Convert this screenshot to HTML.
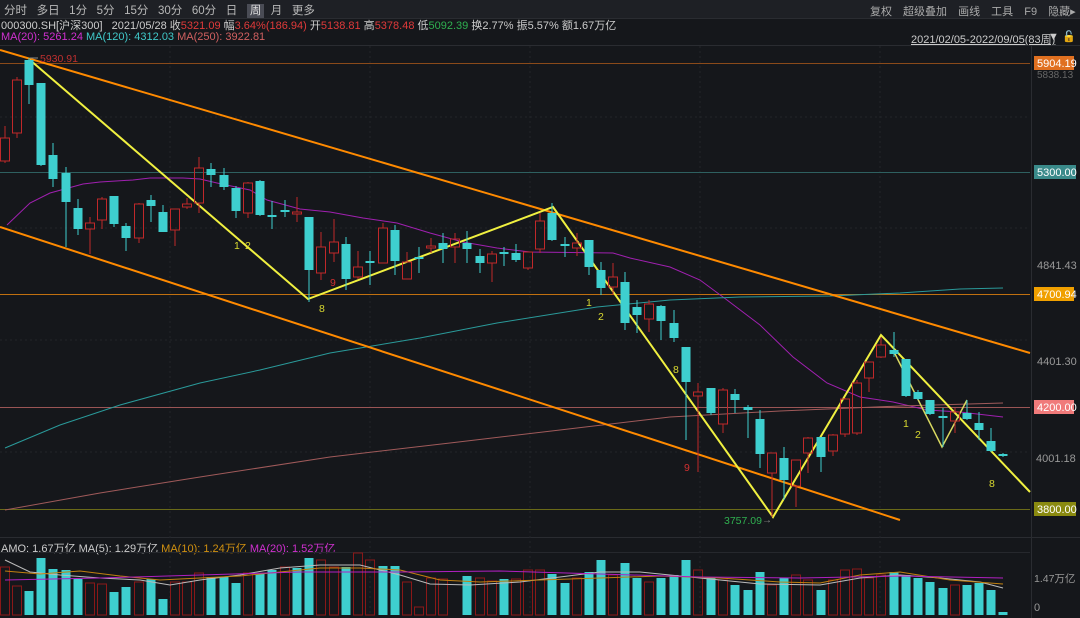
<!DOCTYPE html><html><head><meta charset="utf-8"><style>
*{margin:0;padding:0}body{width:1080px;height:618px;background:#15171b;overflow:hidden;font-family:"Liberation Sans","Noto Sans CJK SC",sans-serif;position:relative;color:#ccc}
.t{position:absolute;white-space:nowrap;font-size:11px}
</style></head><body>
<div style="position:absolute;left:0;top:0;width:1080px;height:18px;background:#1e2025;border-bottom:1px solid #2a2c31"></div>
<div class="t" style="top:2px;left:4px;font-size:11.5px;color:#b8b8b8;word-spacing:0">分时&nbsp;&nbsp;&nbsp;多日&nbsp;&nbsp;&nbsp;1分&nbsp;&nbsp;&nbsp;5分&nbsp;&nbsp;&nbsp;15分&nbsp;&nbsp;&nbsp;30分&nbsp;&nbsp;&nbsp;60分&nbsp;&nbsp;&nbsp;日&nbsp;&nbsp;&nbsp;<span style="background:#4a4c55;color:#ddd;padding:1px 3px">周</span>&nbsp;&nbsp;月&nbsp;&nbsp;&nbsp;更多</div>
<div class="t" style="top:3px;left:870px;color:#aaa;word-spacing:8px">复权 超级叠加 画线 工具 F9 隐藏▸</div>
<div class="t" style="top:17px;left:1px;color:#ccc">000300.SH[沪深300]&nbsp;&nbsp; 2021/05/28 收<span style="color:#e03a3a">5321.09</span> 幅<span style="color:#e03a3a">3.64%(186.94)</span> 开<span style="color:#e03a3a">5138.81</span> 高<span style="color:#e03a3a">5378.48</span> 低<span style="color:#2fb050">5092.39</span> 换2.77% 振5.57% 额1.67万亿</div>
<div class="t" style="top:31px;left:1px"><span style="color:#d030d0">MA(20): 5261.24</span> <span style="color:#40c8c8">MA(120): 4312.03</span> <span style="color:#d06060">MA(250): 3922.81</span></div>
<div class="t" style="top:31px;left:911px;color:#ccc;text-decoration:underline">2021/02/05-2022/09/05(83周)</div>
<div class="t" style="top:30px;left:1048px;color:#ccc">▼ <span style="color:#e0a000">🔓</span></div>
<div class="t" style="top:540px;left:1px"><span style="color:#ccc">AMO: 1.67万亿 MA(5): 1.29万亿</span> <span style="color:#d09010">MA(10): 1.24万亿</span> <span style="color:#d030d0">MA(20): 1.52万亿</span></div>
<svg width="1080" height="618" style="position:absolute;left:0;top:0" font-family="Liberation Sans,sans-serif" font-size="11">
<line x1="0" y1="45.5" x2="1080" y2="45.5" stroke="#2a2c31"/>
<line x1="0" y1="537.5" x2="1080" y2="537.5" stroke="#2a2c31"/>
<line x1="0" y1="552.5" x2="1030" y2="552.5" stroke="#26282d"/>
<line x1="1031.5" y1="46" x2="1031.5" y2="618" stroke="#2a2c31"/>
<g stroke="#22252a" stroke-dasharray="2,3"><line x1="0" y1="117" x2="1030" y2="117"/><line x1="0" y1="228" x2="1030" y2="228"/><line x1="0" y1="340" x2="1030" y2="340"/><line x1="0" y1="452" x2="1030" y2="452"/>
<line x1="170" y1="46" x2="170" y2="615"/><line x1="370" y1="46" x2="370" y2="615"/><line x1="530" y1="46" x2="530" y2="615"/><line x1="700" y1="46" x2="700" y2="615"/><line x1="880" y1="46" x2="880" y2="615"/></g>
<line x1="0" y1="63.5" x2="1030" y2="63.5" stroke="#8a4a1a"/>
<line x1="0" y1="172.5" x2="1030" y2="172.5" stroke="#2e6060"/>
<line x1="0" y1="294.5" x2="1030" y2="294.5" stroke="#c07010"/>
<line x1="0" y1="407.5" x2="1030" y2="407.5" stroke="#9a5555"/>
<line x1="0" y1="509.5" x2="1030" y2="509.5" stroke="#6a6a18"/>
<polyline fill="none" stroke="#a020b0" stroke-width="1" points="7,225 30,203 50,193 83,184 100,182 133,180 150,178 183,178 200,179 217,183 250,190 267,200 300,209 330,212 363,218 397,223 430,233 463,242 497,248 530,252 613,253 630,258 670,267 700,280 727,300 760,325 793,357 827,383 860,397 893,402 927,410 960,412 1003,417"/>
<polyline fill="none" stroke="#2a9a9a" points="5,448 60,425 120,405 200,383 260,370 330,353 420,338 497,323 597,307 670,300 740,297 830,296 900,293 960,289 1003,288"/>
<polyline fill="none" stroke="#a05a5a" points="5,510 100,493 200,477 330,457 450,443 560,430 670,417 780,411 900,406 1003,403"/>
<g stroke="#ff8a00" stroke-width="2"><line x1="0" y1="50" x2="1030" y2="353"/><line x1="0" y1="227" x2="900" y2="520"/></g>
<polyline fill="none" stroke="#f0f040" stroke-width="2" points="30,60 308,299 553,207 773,517 881,335 1030,492"/>
<polyline fill="none" stroke="#d8d860" stroke-width="1.5" points="893,350 942,447 967,400"/>
<g id="c"></g>
<g stroke-width="1">
<path stroke="#c0282a" fill="none" d="M5 126V138M5 161V163M17 77V80M17 133V138M90 217V223M90 229V254M102 197V199M102 220V229M139 203V204M139 238V243M175 230V246M187 198V204M187 207V209M199 157V168M199 203V213M248 182V183M248 213V218M297 197V212M297 214V222M321 232V247M321 273V280M334 219V242M334 253V262M358 251V267M358 277V279M383 223V228M407 252V262M431 238V246M431 248V253M455 233V239M455 247V263M492 251V254M492 263V282M528 268V270M540 213V221M540 249V253M577 233V243M577 248V256M613 263V277M613 287V295M649 300V304M649 319V332M698 383V392M698 396V472M723 388V390M723 424V433M772 473V517M796 486V507M808 437V438M808 453V473M833 434V435M833 451V456M845 398V399M845 434V437M857 380V383M857 433V435M869 378V392M881 337V345M881 357V358M955 408V412M955 421V433"/>
<g fill="none" stroke="#c0282a"><rect x="0.5" y="138" width="9" height="23"/><rect x="12.5" y="80" width="9" height="53"/><rect x="85.5" y="223" width="9" height="6"/><rect x="97.5" y="199" width="9" height="21"/><rect x="134.5" y="204" width="9" height="34"/><rect x="170.5" y="209" width="9" height="21"/><rect x="182.5" y="204" width="9" height="3"/><rect x="194.5" y="168" width="9" height="35"/><rect x="243.5" y="183" width="9" height="30"/><rect x="292.5" y="212" width="9" height="2"/><rect x="316.5" y="247" width="9" height="26"/><rect x="329.5" y="242" width="9" height="11"/><rect x="353.5" y="267" width="9" height="10"/><rect x="378.5" y="228" width="9" height="35"/><rect x="402.5" y="262" width="9" height="17"/><rect x="426.5" y="246" width="9" height="2"/><rect x="450.5" y="239" width="9" height="8"/><rect x="487.5" y="254" width="9" height="9"/><rect x="523.5" y="252" width="9" height="16"/><rect x="535.5" y="221" width="9" height="28"/><rect x="572.5" y="243" width="9" height="5"/><rect x="608.5" y="277" width="9" height="10"/><rect x="644.5" y="304" width="9" height="15"/><rect x="693.5" y="392" width="9" height="4"/><rect x="718.5" y="390" width="9" height="34"/><rect x="767.5" y="453" width="9" height="20"/><rect x="791.5" y="460" width="9" height="26"/><rect x="803.5" y="438" width="9" height="15"/><rect x="828.5" y="435" width="9" height="16"/><rect x="840.5" y="399" width="9" height="35"/><rect x="852.5" y="383" width="9" height="50"/><rect x="864.5" y="362" width="9" height="16"/><rect x="876.5" y="345" width="9" height="12"/><rect x="950.5" y="412" width="9" height="9"/></g>
<path stroke="#3ecfcf" d="M29 58V104M41 83V166M53 143V187M66 167V247M78 199V235M114 196V227M126 223V251M151 195V222M163 205V232M211 163V187M224 168V190M236 186V218M260 180V216M272 201V229M285 200V217M309 217V302M346 237V290M370 251V285M395 225V275M419 247V273M443 233V263M467 231V263M480 249V273M504 247V266M516 244V262M552 203V241M565 237V257M589 240V275M601 262V295M625 272V330M637 300V333M661 305V340M674 310V342M686 347V440M711 388V415M735 389V413M748 405V438M760 410V468M784 447V500M821 437V472M894 332V357M906 359V397M918 390V400M930 400V415M943 408V447M967 400V420M979 412V440M991 428V452M1003 453V457"/>
<g fill="#3ecfcf"><rect x="24.5" y="60" width="9" height="25"/><rect x="36.5" y="83" width="9" height="82"/><rect x="48.5" y="155" width="9" height="24"/><rect x="61.5" y="173" width="9" height="29"/><rect x="73.5" y="208" width="9" height="21"/><rect x="109.5" y="196" width="9" height="28"/><rect x="121.5" y="226" width="9" height="12"/><rect x="146.5" y="200" width="9" height="6"/><rect x="158.5" y="212" width="9" height="20"/><rect x="206.5" y="169" width="9" height="6"/><rect x="219.5" y="175" width="9" height="12"/><rect x="231.5" y="188" width="9" height="23"/><rect x="255.5" y="181" width="9" height="34"/><rect x="267.5" y="215" width="9" height="2"/><rect x="280.5" y="210" width="9" height="2"/><rect x="304.5" y="217" width="9" height="53"/><rect x="341.5" y="244" width="9" height="35"/><rect x="365.5" y="261" width="9" height="2"/><rect x="390.5" y="230" width="9" height="31"/><rect x="414.5" y="257" width="9" height="2"/><rect x="438.5" y="243" width="9" height="6"/><rect x="462.5" y="243" width="9" height="6"/><rect x="475.5" y="256" width="9" height="7"/><rect x="499.5" y="252" width="9" height="2"/><rect x="511.5" y="253" width="9" height="7"/><rect x="547.5" y="213" width="9" height="27"/><rect x="560.5" y="244" width="9" height="2"/><rect x="584.5" y="240" width="9" height="27"/><rect x="596.5" y="270" width="9" height="18"/><rect x="620.5" y="282" width="9" height="41"/><rect x="632.5" y="307" width="9" height="8"/><rect x="656.5" y="306" width="9" height="15"/><rect x="669.5" y="323" width="9" height="15"/><rect x="681.5" y="347" width="9" height="35"/><rect x="706.5" y="388" width="9" height="25"/><rect x="730.5" y="394" width="9" height="6"/><rect x="743.5" y="407" width="9" height="3"/><rect x="755.5" y="419" width="9" height="35"/><rect x="779.5" y="458" width="9" height="22"/><rect x="816.5" y="437" width="9" height="20"/><rect x="889.5" y="350" width="9" height="4"/><rect x="901.5" y="359" width="9" height="37"/><rect x="913.5" y="392" width="9" height="7"/><rect x="925.5" y="400" width="9" height="14"/><rect x="938.5" y="416" width="9" height="2"/><rect x="962.5" y="413" width="9" height="6"/><rect x="974.5" y="423" width="9" height="7"/><rect x="986.5" y="441" width="9" height="10"/><rect x="998.5" y="454" width="9" height="2"/></g>
</g>
<g font-size="10.5" fill="#d8d830"><text x="234" y="249">1</text><text x="245" y="249">2</text><text x="319" y="312">8</text><text x="586" y="306">1</text><text x="598" y="320">2</text><text x="673" y="373">8</text><text x="903" y="427">1</text><text x="915" y="438">2</text><text x="989" y="487">8</text></g>
<g font-size="10.5" fill="#d03030"><text x="330" y="286">9</text><text x="684" y="471">9</text></g>
<text x="40" y="62" fill="#c03030" font-size="10.5">5930.91</text><line x1="30" y1="58" x2="38" y2="58" stroke="#888"/>
<text x="724" y="524" fill="#30b050" font-size="10.5">3757.09</text><text x="762" y="523" fill="#888" font-size="10">→</text>
<g font-size="11">
<rect x="1034" y="56" width="40" height="14" fill="#e07020"/><text x="1037" y="67" fill="#fff">5904.19</text><text x="1037" y="78" fill="#666" font-size="10">5838.13</text>
<rect x="1034" y="165" width="42" height="14" fill="#3a8a8a"/><text x="1037" y="176" fill="#fff">5300.00</text>
<text x="1037" y="269" fill="#999">4841.43</text>
<rect x="1034" y="287" width="40" height="14" fill="#f0a000"/><text x="1037" y="298" fill="#fff">4700.94</text>
<text x="1037" y="365" fill="#999">4401.30</text>
<rect x="1034" y="400" width="40" height="14" fill="#f07a7a"/><text x="1037" y="411" fill="#fff">4200.00</text>
<text x="1036" y="462" fill="#999">4001.18</text>
<rect x="1034" y="502" width="42" height="14" fill="#8a8a10"/><text x="1037" y="513" fill="#fff">3800.00</text>
<text x="1034" y="582" fill="#999" font-size="10.5">1.47万亿</text><text x="1034" y="611" fill="#999">0</text></g>
<g fill="none" stroke="#8a1818" stroke-width="1">
<rect x="0.5" y="567" width="9" height="48"/><rect x="12.5" y="586" width="9" height="29"/><rect x="85.5" y="583" width="9" height="32"/><rect x="97.5" y="584" width="9" height="31"/><rect x="134.5" y="582" width="9" height="33"/><rect x="170.5" y="582" width="9" height="33"/><rect x="182.5" y="582" width="9" height="33"/><rect x="194.5" y="573" width="9" height="42"/><rect x="243.5" y="573" width="9" height="42"/><rect x="280.5" y="567" width="9" height="48"/><rect x="316.5" y="560" width="9" height="55"/><rect x="329.5" y="567" width="9" height="48"/><rect x="353.5" y="553" width="9" height="62"/><rect x="365.5" y="560" width="9" height="55"/><rect x="402.5" y="582" width="9" height="33"/><rect x="414.5" y="607" width="9" height="8"/><rect x="426.5" y="578" width="9" height="37"/><rect x="438.5" y="579" width="9" height="36"/><rect x="475.5" y="578" width="9" height="37"/><rect x="487.5" y="581" width="9" height="34"/><rect x="511.5" y="579" width="9" height="36"/><rect x="523.5" y="570" width="9" height="45"/><rect x="535.5" y="570" width="9" height="45"/><rect x="572.5" y="578" width="9" height="37"/><rect x="608.5" y="575" width="9" height="40"/><rect x="644.5" y="582" width="9" height="33"/><rect x="693.5" y="570" width="9" height="45"/><rect x="718.5" y="580" width="9" height="35"/><rect x="767.5" y="585" width="9" height="30"/><rect x="791.5" y="575" width="9" height="40"/><rect x="803.5" y="580" width="9" height="35"/><rect x="828.5" y="580" width="9" height="35"/><rect x="840.5" y="570" width="9" height="45"/><rect x="852.5" y="569" width="9" height="46"/><rect x="864.5" y="578" width="9" height="37"/><rect x="876.5" y="575" width="9" height="40"/><rect x="950.5" y="585" width="9" height="30"/></g>
<g fill="#3ecfcf"><rect x="24.5" y="591" width="9" height="24"/><rect x="36.5" y="558" width="9" height="57"/><rect x="48.5" y="569" width="9" height="46"/><rect x="61.5" y="570" width="9" height="45"/><rect x="73.5" y="579" width="9" height="36"/><rect x="109.5" y="592" width="9" height="23"/><rect x="121.5" y="587" width="9" height="28"/><rect x="146.5" y="579" width="9" height="36"/><rect x="158.5" y="599" width="9" height="16"/><rect x="206.5" y="577" width="9" height="38"/><rect x="219.5" y="577" width="9" height="38"/><rect x="231.5" y="583" width="9" height="32"/><rect x="255.5" y="574" width="9" height="41"/><rect x="267.5" y="570" width="9" height="45"/><rect x="292.5" y="568" width="9" height="47"/><rect x="304.5" y="558" width="9" height="57"/><rect x="341.5" y="567" width="9" height="48"/><rect x="378.5" y="566" width="9" height="49"/><rect x="390.5" y="566" width="9" height="49"/><rect x="462.5" y="576" width="9" height="39"/><rect x="499.5" y="579" width="9" height="36"/><rect x="547.5" y="574" width="9" height="41"/><rect x="560.5" y="583" width="9" height="32"/><rect x="584.5" y="572" width="9" height="43"/><rect x="596.5" y="560" width="9" height="55"/><rect x="620.5" y="563" width="9" height="52"/><rect x="632.5" y="578" width="9" height="37"/><rect x="656.5" y="578" width="9" height="37"/><rect x="669.5" y="575" width="9" height="40"/><rect x="681.5" y="560" width="9" height="55"/><rect x="706.5" y="578" width="9" height="37"/><rect x="730.5" y="585" width="9" height="30"/><rect x="743.5" y="590" width="9" height="25"/><rect x="755.5" y="572" width="9" height="43"/><rect x="779.5" y="578" width="9" height="37"/><rect x="816.5" y="590" width="9" height="25"/><rect x="889.5" y="572" width="9" height="43"/><rect x="901.5" y="575" width="9" height="40"/><rect x="913.5" y="578" width="9" height="37"/><rect x="925.5" y="582" width="9" height="33"/><rect x="938.5" y="588" width="9" height="27"/><rect x="962.5" y="585" width="9" height="30"/><rect x="974.5" y="583" width="9" height="32"/><rect x="986.5" y="590" width="9" height="25"/><rect x="998.5" y="612" width="9" height="3"/></g>
<polyline fill="none" stroke="#bbb" points="5,560 30,572 60,575 100,578 140,580 170,585 200,580 240,575 280,568 320,565 360,565 400,575 430,584 470,585 520,582 560,577 600,572 640,572 700,578 760,584 820,585 860,578 900,575 940,578 980,582 1003,588"/>
<polyline fill="none" stroke="#c08010" points="5,571 40,574 80,571 120,576 160,580 200,578 240,576 280,572 320,568 360,568 400,570 440,580 480,582 540,580 600,578 660,576 720,578 780,582 820,583 860,575 900,572 950,580 1003,584"/>
<polyline fill="none" stroke="#b020c0" points="5,580 100,578 200,575 300,572 400,572 500,571 600,574 700,577 800,578 900,576 1003,578"/>
</svg>
</body></html>
